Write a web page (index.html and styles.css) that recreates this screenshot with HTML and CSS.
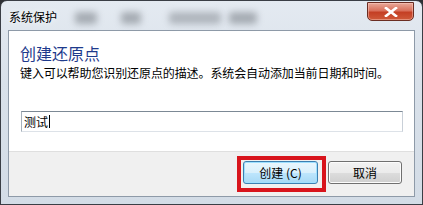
FILE: index.html
```html
<!DOCTYPE html>
<html lang="zh-CN">
<head>
    <meta charset="UTF-8">
    <title>系统保护</title>
    <link rel="stylesheet" href="styles.css">
</head>
<body>
    <div class="window">
        <!-- 标题栏 -->
        <div class="titlebar">
            <span class="title">系统保护</span>
            <div class="glass-blur">
                <span class="blob b1"></span>
                <span class="blob b2"></span>
                <span class="blob b3"></span>
                <span class="blob b4"></span>
            </div>
            <button class="close-btn">
                <svg width="14" height="10" viewBox="0 0 14 10">
                    <path d="M2 1 L12 9 M12 1 L2 9" stroke="#fff" stroke-width="2.6" stroke-linecap="square"/>
                </svg>
            </button>
        </div>

        <!-- 客户区 -->
        <div class="client">
            <div class="content">
                <h1 class="main-title">创建还原点</h1>
                <p class="desc">键入可以帮助您识别还原点的描述。系统会自动添加当前日期和时间。</p>
                <div class="text-input">测试<span class="caret"></span></div>
            </div>
            <div class="footer">
                <button class="btn btn-default">创建 (C)</button>
                <button class="btn">取消</button>
            </div>
        </div>
    </div>
</body>
</html>
```

FILE: styles.css
```css
/* 基本重置 */
html, body {
    margin: 0;
    padding: 0;
    background: #2e3034;
    font-family: "Noto Sans CJK SC", "Noto Sans", sans-serif;
}

* {
    box-sizing: border-box;
}

/* 窗口外框（Aero 玻璃） */
.window {
    width: 423px;
    height: 205px;
    border: 1px solid #3a3e45;
    border-radius: 7px 7px 0 0;
    background: linear-gradient(to bottom, #e4eaf1, #d9e1ea 40%, #d3dce6);
    padding: 0 7px 7px 7px;
    display: flex;
    flex-direction: column;
}

/* 标题栏 */
.titlebar {
    height: 29px;
    display: flex;
    align-items: flex-start;
    padding-left: 1px;
}

.title {
    margin-top: 8px;
    font-size: 12px;
    line-height: 15px;
    color: #000;
    text-shadow: 0 0 6px #fff;
}

/* 标题栏背后模糊的内容 */
.glass-blur {
    display: flex;
    margin-top: 11px;
    margin-left: 18px;
}

.blob {
    display: block;
    height: 12px;
    background: #7d838a;
    opacity: 0.6;
    filter: blur(3.5px);
    border-radius: 3px;
}

.b1 { width: 22px; }
.b2 { width: 20px; margin-left: 24px; }
.b3 { width: 52px; margin-left: 28px; opacity: 0.5; }
.b4 { width: 28px; margin-left: 8px; }

/* 关闭按钮 */
.close-btn {
    margin-left: auto;
    margin-right: 1px;
    margin-top: 1px;
    width: 47px;
    height: 19px;
    border: 1px solid #6a2d22;
    border-radius: 0 0 5px 5px;
    background: linear-gradient(to bottom, #e9a999 0%, #d9705b 45%, #c43f24 55%, #cf5a3a 100%);
    box-shadow: inset 0 0 0 1px rgba(255, 210, 200, 0.45);
    padding: 0;
    display: flex;
    align-items: center;
    justify-content: center;
}

/* 客户区 */
.client {
    flex: 1;
    border: 1px solid #8e9aa8;
    display: flex;
    flex-direction: column;
}

.content {
    height: 120px;
    background: #fff;
    padding: 12px 11px 0 11px;
}

.main-title {
    margin: 0;
    font-size: 16px;
    font-weight: normal;
    line-height: 20px;
    color: #1e3a8c;
}

.desc {
    margin: 2px 0 0 0;
    font-size: 12px;
    line-height: 16px;
    color: #000;
    letter-spacing: -0.1px;
}

/* 文本框 */
.text-input {
    margin: 30px 0 0 1px;
    height: 21px;
    border: 1px solid;
    border-color: #7c8995 #c9d0d8 #dde2e8 #a7b1bb;
    font-size: 12px;
    line-height: 19px;
    padding-left: 2px;
    color: #000;
    display: flex;
    align-items: center;
}

.caret {
    display: inline-block;
    width: 1px;
    height: 13px;
    background: #000;
    margin-left: 1px;
}

/* 底部按钮区 */
.footer {
    flex: 1;
    border-top: 1px solid #dfdfdf;
    background: #f0f0f0;
    display: flex;
    justify-content: flex-end;
    align-items: flex-start;
    gap: 10px;
    padding: 9px 12px 0 0;
}

.btn {
    width: 74px;
    height: 23px;
    border: 1px solid #707070;
    border-radius: 3px;
    background: linear-gradient(to bottom, #f2f2f2 0%, #ebebeb 50%, #dddddd 51%, #cfcfcf 100%);
    box-shadow: inset 0 0 0 1px #fcfcfc;
    font-family: "Noto Sans CJK SC", "Noto Sans", sans-serif;
    font-size: 12px;
    color: #000;
    padding: 0;
}

/* 默认按钮 */
.btn-default {
    position: relative;
    width: 75px;
    border-color: #3c7fb1;
    background: linear-gradient(to bottom, #eaf6fd 0%, #d9f0fc 50%, #bee6fd 51%, #a7d9f5 100%);
    box-shadow: inset 0 0 0 1px #9ee0ff;
}

/* 截图上的红色标注框 */
.btn-default::after {
    content: "";
    position: absolute;
    top: -6px;
    left: -7px;
    right: -9px;
    bottom: -9px;
    border: 4px solid #d8141c;
}
```
